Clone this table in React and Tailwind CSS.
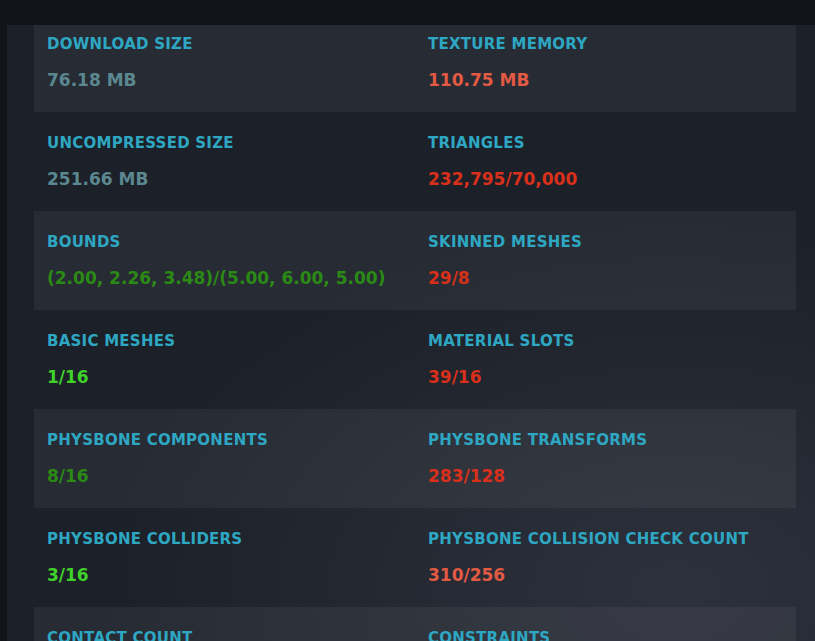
import React from 'react';

const stats = [
  [
    { label: 'Download Size', value: '76.18 MB', tone: 'muted' },
    { label: 'Texture Memory', value: '110.75 MB', tone: 'warn' },
  ],
  [
    { label: 'Uncompressed Size', value: '251.66 MB', tone: 'muted' },
    { label: 'Triangles', value: '232,795/70,000', tone: 'bad' },
  ],
  [
    { label: 'Bounds', value: '(2.00, 2.26, 3.48)/(5.00, 6.00, 5.00)', tone: 'ok' },
    { label: 'Skinned Meshes', value: '29/8', tone: 'bad' },
  ],
  [
    { label: 'Basic Meshes', value: '1/16', tone: 'good' },
    { label: 'Material Slots', value: '39/16', tone: 'bad' },
  ],
  [
    { label: 'PhysBone Components', value: '8/16', tone: 'ok' },
    { label: 'PhysBone Transforms', value: '283/128', tone: 'bad' },
  ],
  [
    { label: 'PhysBone Colliders', value: '3/16', tone: 'good' },
    { label: 'PhysBone Collision Check Count', value: '310/256', tone: 'warn' },
  ],
  [
    { label: 'Contact Count', value: '2/16', tone: 'good' },
    { label: 'Constraints', value: '0/100', tone: 'good' },
  ],
];

const toneClass = {
  muted: 'text-[#5b8890]',
  warn: 'text-[#e25a43]',
  bad: 'text-[#d8301a]',
  ok: 'text-[#2b8a15]',
  good: 'text-[#40d22a]',
};

function Stat({ stat }) {
  return (
    <div>
      <div className="text-[15px] leading-[20px] font-bold uppercase tracking-[0.25px] text-[#2ea7c3]">{stat.label}</div>
      <div className={`mt-[14px] text-[17px] leading-[24px] font-bold whitespace-nowrap ${toneClass[stat.tone]}`}>
        {stat.value}
      </div>
    </div>
  );
}

export default function App() {
  return (
    <div className="w-[815px] h-[641px] overflow-hidden bg-[#111419] font-['DejaVu_Sans',Verdana,sans-serif]">
      <div className="h-[25px]" />
      {/* stats panel, scrolled a little so the first row sits under the header */}
      <div className="ml-[7px] w-[816px] h-[616px] overflow-hidden px-[27px] bg-[radial-gradient(ellipse_70%_60%_at_82%_92%,#2d313c_0%,#1c2028_100%)]">
        <div className="-mt-[12px]">
          {stats.map((row, i) => (
            <div
              key={i}
              className={`grid grid-cols-[381px_1fr] px-[13px] pt-[21px] pb-[20px] ${i % 2 === 0 ? 'bg-white/5' : ''}`}
            >
              {row.map((stat) => (
                <Stat key={stat.label} stat={stat} />
              ))}
            </div>
          ))}
        </div>
      </div>
    </div>
  );
}
